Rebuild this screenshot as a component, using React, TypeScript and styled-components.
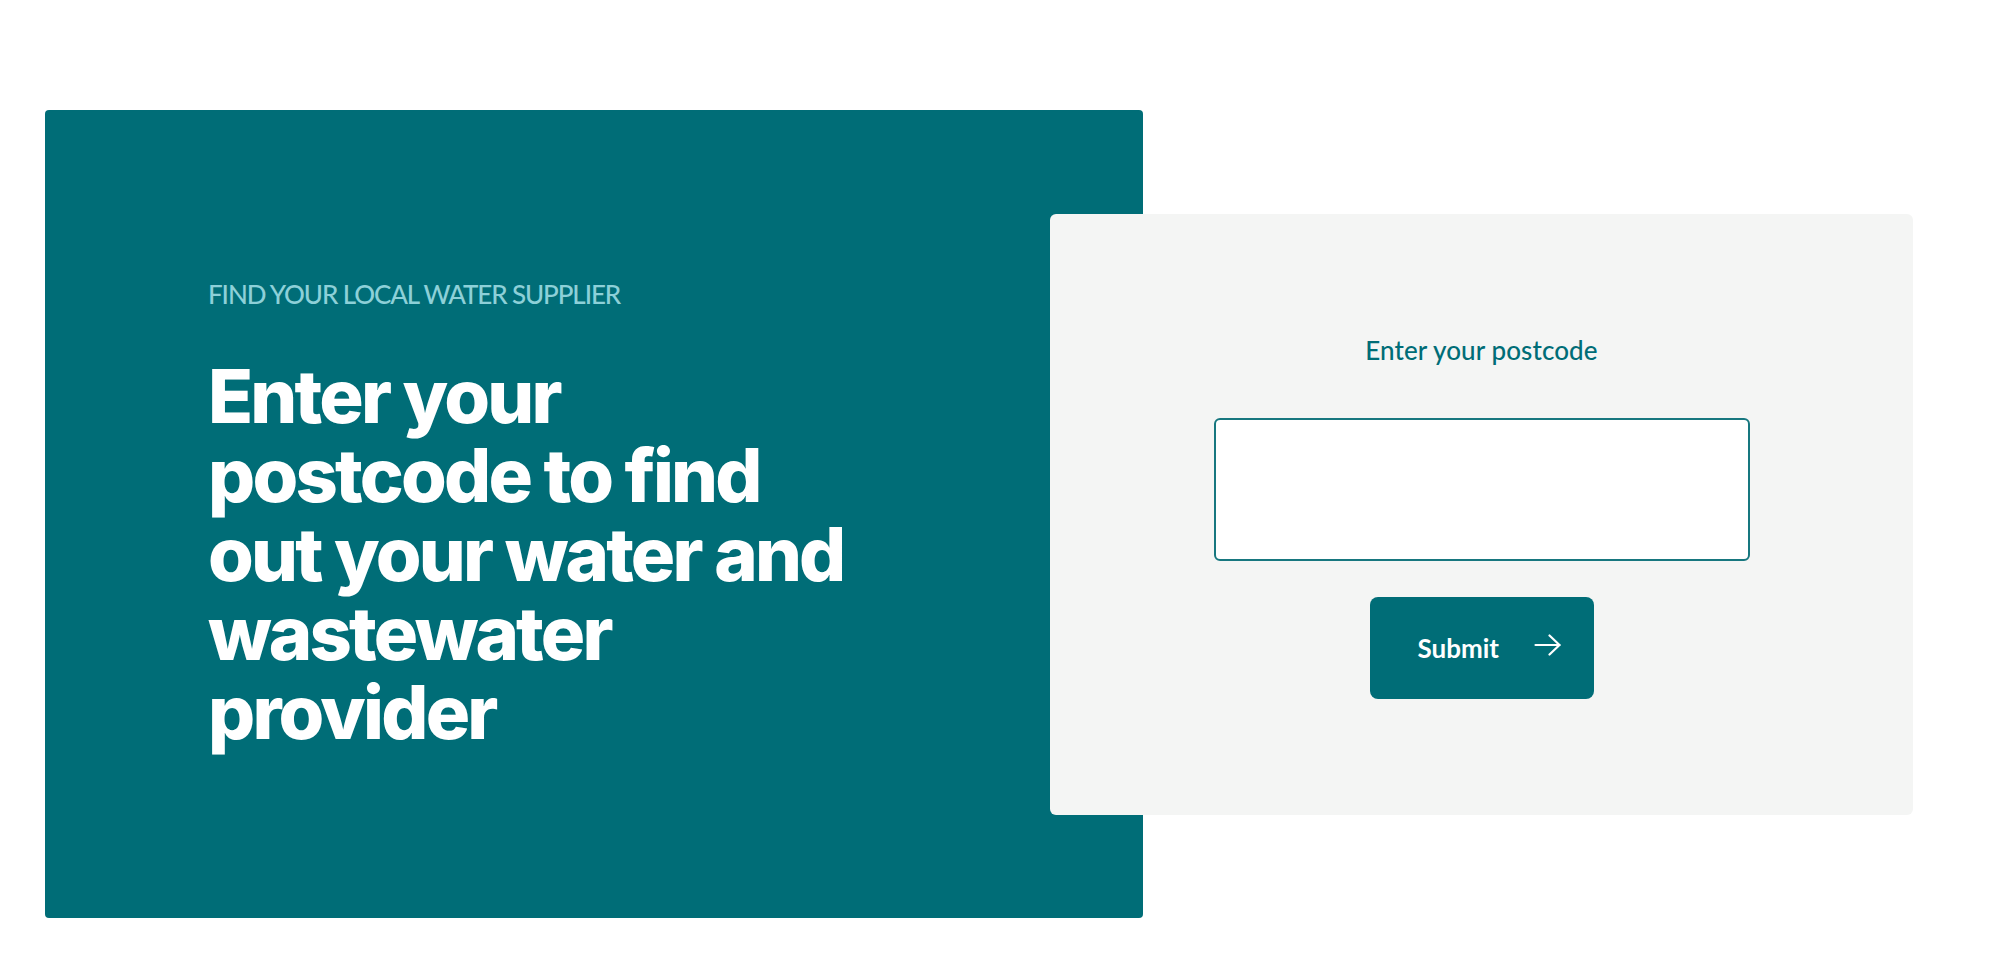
import React, { useState } from "react";
import styled, { createGlobalStyle } from "styled-components";

const teal = "#006d77";

const GlobalStyle = createGlobalStyle`
  * {
    box-sizing: border-box;
  }
  html, body {
    margin: 0;
    padding: 0;
    background: #ffffff;
  }
  body {
    font-family: Lato, "Noto Sans", sans-serif;
  }
`;

const Page = styled.main`
  min-height: 100vh;
  padding: 110px 0 0 45px;
`;

const Row = styled.div`
  display: flex;
  align-items: center;
`;

const Hero = styled.section`
  width: 1098px;
  height: 808px;
  flex-shrink: 0;
  background: ${teal};
  border-radius: 4px;
  padding: 168px 0 0 163px;
`;

const Eyebrow = styled.p`
  margin: 0;
  font-size: 26px;
  line-height: 32px;
  font-weight: 500;
  letter-spacing: -1.1px;
  text-transform: uppercase;
  color: #8dd0d8;
`;

const Heading = styled.h1`
  margin: 47px 0 0;
  max-width: 660px;
  font-family: Inter, Lato, sans-serif;
  font-size: 74px;
  line-height: 79px;
  font-weight: 800;
  letter-spacing: -2.8px;
  color: #ffffff;
`;

const FormCard = styled.form`
  position: relative;
  z-index: 1;
  width: 863px;
  height: 601px;
  flex-shrink: 0;
  margin-left: -93px;
  background: #f4f5f4;
  border-radius: 6px;
  padding-top: 120px;
  display: flex;
  flex-direction: column;
  align-items: center;
`;

const Label = styled.label`
  font-size: 26px;
  line-height: 32px;
  font-weight: 500;
  letter-spacing: 0.1px;
  color: ${teal};
`;

const Input = styled.input`
  margin-top: 52px;
  width: 536px;
  height: 143px;
  border: 2px solid #17777f;
  border-radius: 6px;
  background: #ffffff;
  font-family: inherit;
  font-size: 28px;
  padding: 0 24px;
  color: #1d2b2c;
  outline: none;
`;

const SubmitButton = styled.button`
  margin-top: 36px;
  width: 224px;
  height: 102px;
  border: none;
  border-radius: 8px;
  background: ${teal};
  color: #ffffff;
  display: flex;
  align-items: center;
  gap: 35px;
  padding: 0 0 0 48px;
  font-family: inherit;
  font-size: 26px;
  font-weight: 700;
  cursor: pointer;
`;

const ArrowIcon = styled.svg`
  width: 27px;
  height: 22px;
  margin-top: -5px;
`;

function Arrow() {
  return (
    <ArrowIcon viewBox="0 0 27 22" fill="none" stroke="currentColor" strokeWidth={2.2} strokeLinecap="round" strokeLinejoin="round">
      <path d="M1.5 11h24" />
      <path d="M15.5 1.5L25.5 11l-10 9.5" />
    </ArrowIcon>
  );
}

export default function App() {
  const [postcode, setPostcode] = useState("");

  return (
    <>
      <GlobalStyle />
      <Page>
        <Row>
          <Hero>
            <Eyebrow>Find your local water supplier</Eyebrow>
            <Heading>Enter your postcode to find out your water and wastewater provider</Heading>
          </Hero>
          <FormCard onSubmit={(e) => e.preventDefault()}>
            <Label htmlFor="postcode">Enter your postcode</Label>
            <Input
              id="postcode"
              type="text"
              value={postcode}
              onChange={(e) => setPostcode(e.target.value)}
            />
            <SubmitButton type="submit">
              Submit
              <Arrow />
            </SubmitButton>
          </FormCard>
        </Row>
      </Page>
    </>
  );
}
